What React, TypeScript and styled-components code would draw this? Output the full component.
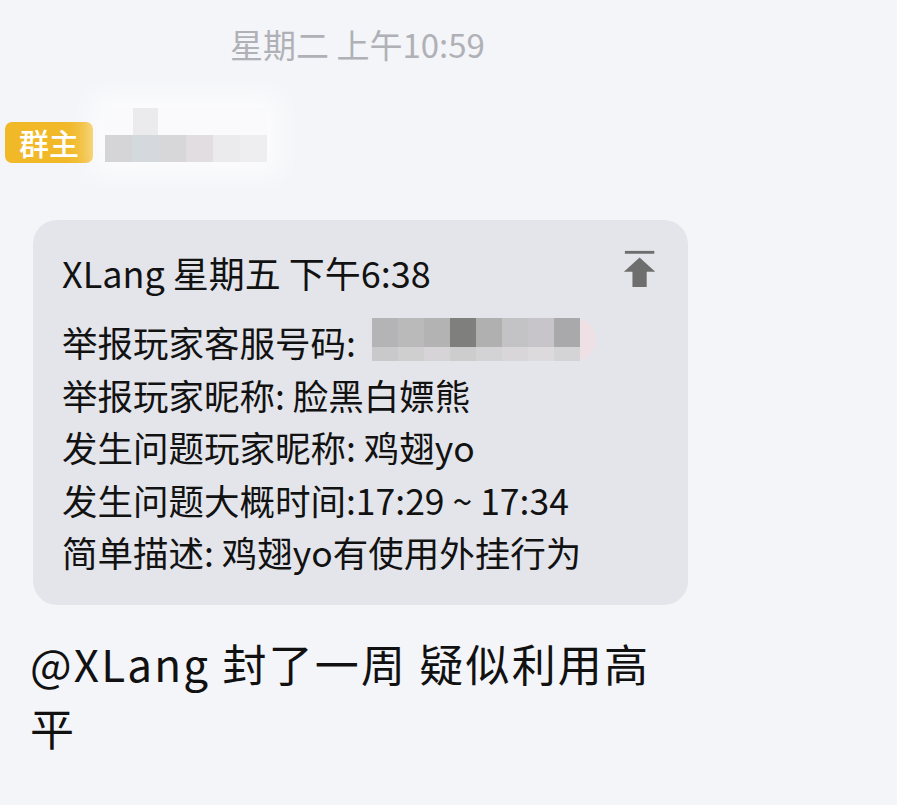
import styled, { createGlobalStyle } from 'styled-components';

const GlobalStyle = createGlobalStyle`
    html, body {
        margin: 0;
        padding: 0;
        background: #f4f5f9;
    }
    body {
        font-family: 'Noto Sans CJK SC', 'Noto Sans', sans-serif;
        color: #121212;
    }
`;

const nameBlocks = ['#d5d5d7', '#d4d9dd', '#d7d7d9', '#e1dde0', '#ebebed', '#eeeef0'];
const numberBlocks = ['#b4b4b6', '#bababa', '#b3b3b3', '#7f807e', '#b0b0b0', '#c3c3c5', '#c7c5c9', '#a9a8aa'];
const numberLower = ['#c9c8ca', '#cfcfd0', '#d6d4d6', '#cdcdce', '#d3d2d4', '#d8d6d8', '#dcdadc', '#d4d3d5'];

const App = () => {
    return (
        <Page>
            <GlobalStyle />
            <TimeStamp>星期二 上午10:59</TimeStamp>

            <SenderRow>
                <RoleBadge>群主</RoleBadge>
                <NameMosaic>
                    <MosaicTop />
                    <MosaicRow>
                        {nameBlocks.map((c, i) => (
                            <Block key={i} $color={c} $w={27} $h={27} />
                        ))}
                    </MosaicRow>
                </NameMosaic>
            </SenderRow>

            <QuoteCard>
                <QuoteHeader>
                    <span>XLang 星期五 下午6:38</span>
                    <PinIcon viewBox="0 0 40 40">
                        <rect x="3" y="2" width="31" height="3" fill="#6e6e6e" />
                        <path d="M18.5 9 L35 24 L26 24 L26 40 L11 40 L11 24 L2 24 Z" fill="#6e6e6e" />
                    </PinIcon>
                </QuoteHeader>
                <QuoteLine>
                    举报玩家客服号码:{' '}
                    <NumberMosaic>
                        <MosaicRow>
                            {numberBlocks.map((c, i) => (
                                <Block key={i} $color={c} $w={26} $h={29} />
                            ))}
                        </MosaicRow>
                        <MosaicRow>
                            {numberLower.map((c, i) => (
                                <Block key={i} $color={c} $w={26} $h={14} />
                            ))}
                        </MosaicRow>
                    </NumberMosaic>
                </QuoteLine>
                <QuoteLine>举报玩家昵称: 脸黑白嫖熊</QuoteLine>
                <QuoteLine>发生问题玩家昵称: 鸡翅yo</QuoteLine>
                <QuoteLine>发生问题大概时间:17:29 ~ 17:34</QuoteLine>
                <QuoteLine>简单描述: 鸡翅yo有使用外挂行为</QuoteLine>
            </QuoteCard>

            <MessageText>
                @XLang 封了一周 疑似利用高
                <br />平
            </MessageText>
        </Page>
    );
};

const Page = styled.div`
    width: 897px;
    min-height: 805px;
    padding-top: 22px;
    box-sizing: border-box;
    overflow: hidden;
`;

const TimeStamp = styled.div`
    padding-left: 230px;
    font-size: 33px;
    line-height: 44px;
    color: #b0b1b6;
`;

const SenderRow = styled.div`
    display: flex;
    align-items: center;
    margin-top: 56px;
    padding-left: 5px;
    height: 41px;
`;

const RoleBadge = styled.div`
    width: 88px;
    height: 41px;
    border-radius: 7px;
    background: #f1b928;
    color: #ffffff;
    font-size: 30px;
    font-weight: 500;
    line-height: 41px;
    text-align: center;
`;

const NameMosaic = styled.div`
    display: flex;
    flex-direction: column;
    margin-left: 12px;
    margin-top: -16px;
    filter: blur(0.6px);
    box-shadow: 0 0 24px 14px rgba(255, 255, 255, 0.7);
    background: rgba(255, 255, 255, 0.5);
`;

const MosaicTop = styled.div`
    width: 25px;
    height: 27px;
    margin-left: 28px;
    background: #ebebed;
`;

const MosaicRow = styled.div`
    display: flex;
`;

const Block = styled.div<{ $color: string; $w: number; $h: number }>`
    width: ${(p) => p.$w}px;
    height: ${(p) => p.$h}px;
    background: ${(p) => p.$color};
`;

const QuoteCard = styled.div`
    margin: 57px 0 0 33px;
    width: 655px;
    box-sizing: border-box;
    padding: 26px 28px 26px 29px;
    border-radius: 24px;
    background: #e4e5ea;
`;

const QuoteHeader = styled.div`
    display: flex;
    align-items: center;
    justify-content: space-between;
    font-size: 36px;
    line-height: 52px;
    margin-bottom: 18px;
`;

const PinIcon = styled.svg`
    width: 38px;
    height: 40px;
    margin-top: -8px;
`;

const QuoteLine = styled.div`
    font-size: 35.5px;
    line-height: 52.5px;
    height: 52.5px;
    white-space: nowrap;
`;

const NumberMosaic = styled.span`
    display: inline-flex;
    flex-direction: column;
    vertical-align: top;
    margin-top: 2px;
    margin-left: 8px;
    border-radius: 0 24px 24px 0;
    padding-right: 16px;
    background: rgba(240, 222, 228, 0.8);
    filter: blur(0.5px);
`;

const MessageText = styled.div`
    margin: 26px 0 0 30px;
    font-size: 44px;
    letter-spacing: 2.2px;
    line-height: 64px;
    color: #111111;
`;

export default App;
